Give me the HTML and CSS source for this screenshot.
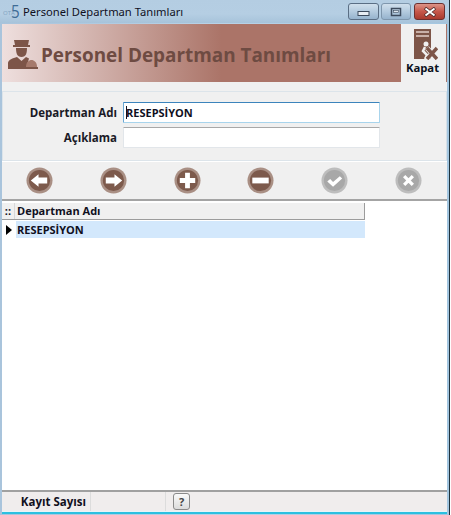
FILE: index.html
```html
<!DOCTYPE html>
<html lang="en">
<head>
    <meta charset="UTF-8">
    <meta name="viewport" content="width=device-width, initial-scale=1.0">
    <title>Personel Departman Tanımları</title>
    <link rel="stylesheet" href="styles.css">
</head>
<body>
    <div class="window">
        <div class="titlebar">
            <div class="app-logo">
                <span class="logo-ota">OTA</span>
                <span class="logo-five">5</span>
            </div>
            <span class="title-text">Personel Departman Tanımları</span>
            <div class="win-buttons">
                <div class="win-btn">
                    <svg width="16" height="10" viewBox="0 0 16 10"><rect x="2" y="4.500" width="11" height="4" fill="#e8eef4" stroke="#3c4a5c"/></svg>
                </div>
                <div class="win-btn win-btn-max">
                    <svg width="12" height="10" viewBox="0 0 12 10"><rect x="1.500" y="1.500" width="9" height="7" fill="none" stroke="#3c4a5c" stroke-width="1.500"/><rect x="3.500" y="3.500" width="5" height="2" fill="#dfe8f0" stroke="#3c4a5c" stroke-width="0.600"/></svg>
                </div>
                <div class="win-btn win-btn-close">
                    <svg width="14" height="10" viewBox="0 0 14 10"><path d="M2 1 L12 9 M12 1 L2 9" stroke="#4a2a2a" stroke-width="3.400"/><path d="M2.500 1.500 L11.500 8.500 M11.500 1.500 L2.500 8.500" stroke="#fff" stroke-width="2"/></svg>
                </div>
            </div>
        </div>

        <div class="content">
            <div class="header">
                <div class="header-main">
                    <svg class="header-icon" width="32" height="32" viewBox="0 0 32 32">
                        <path d="M8 1 L23 1 L22 6 L24 6 L24 8 L7 8 L7 6 L9 6 Z" fill="#7d5548"/>
                        <path d="M10 9 L21 9 C21 14 20 18 15.500 18 C11 18 10 14 10 9 Z" fill="#7d5548"/>
                        <path d="M2 30 L2 24 C2 21 7 19 11 18 L15.500 22 L20 18 C21 18.500 22 19 23 19.500 L20 30 Z" fill="#7d5548"/>
                        <path d="M20 28 C20 23 23 21 25.500 21 C28 21 31 23 31 28 Z" fill="#a67a6c"/>
                        <rect x="19" y="28" width="13" height="2" fill="#7d5548"/>
                    </svg>
                    <span class="header-title">Personel Departman Tanımları</span>
                </div>
                <div class="close-panel">
                    <svg width="25" height="31" viewBox="0 0 25 31">
                        <rect x="1" y="0" width="17" height="30" fill="#7d5548"/>
                        <rect x="3" y="2" width="13" height="2" fill="#c8b0a8"/>
                        <rect x="3" y="6" width="13" height="2" fill="#c8b0a8"/>
                        <circle cx="13" cy="15" r="2.500" fill="#f0f0f0"/>
                        <path d="M12 18 L10 22 L14 26 L12 30" fill="none" stroke="#f0f0f0" stroke-width="2.500"/>
                        <path d="M14 19 L24 30 M24 19 L14 30" stroke="#f0f0f0" stroke-width="5"/>
                        <path d="M14 19 L24 30 M24 19 L14 30" stroke="#7d5548" stroke-width="3.500"/>
                    </svg>
                    <span class="close-label">Kapat</span>
                </div>
            </div>

            <div class="form-area">
                <div class="form-panel">
                    <div class="form-row">
                        <label class="form-label">Departman Adı</label>
                        <div class="form-input form-input-active"><span class="caret"></span>RESEPSİYON</div>
                    </div>
                    <div class="form-row">
                        <label class="form-label">Açıklama</label>
                        <div class="form-input"></div>
                    </div>
                </div>
            </div>

            <div class="toolbar">
                <svg class="tool" viewBox="0 0 28 28"><circle cx="14" cy="14" r="13.500" fill="#a98f84"/><circle cx="14" cy="14" r="11" fill="#7d5a4c"/><path d="M5 14 L13 7.500 L13 11 L22 11 L22 17 L13 17 L13 20.500 Z" fill="#fff"/></svg>
                <svg class="tool" viewBox="0 0 28 28"><circle cx="14" cy="14" r="13.500" fill="#a98f84"/><circle cx="14" cy="14" r="11" fill="#7d5a4c"/><path d="M23 14 L15 7.500 L15 11 L6 11 L6 17 L15 17 L15 20.500 Z" fill="#fff"/></svg>
                <svg class="tool" viewBox="0 0 28 28"><circle cx="14" cy="14" r="13.500" fill="#a98f84"/><circle cx="14" cy="14" r="11" fill="#7d5a4c"/><path d="M11.500 6 H16.500 V11.500 H22 V16.500 H16.500 V22 H11.500 V16.500 H6 V11.500 H11.500 Z" fill="#fff"/></svg>
                <svg class="tool" viewBox="0 0 28 28"><circle cx="14" cy="14" r="13.500" fill="#a98f84"/><circle cx="14" cy="14" r="11" fill="#7d5a4c"/><rect x="5.500" y="11" width="17" height="6" fill="#fff"/></svg>
                <svg class="tool" viewBox="0 0 28 28"><circle cx="14" cy="14" r="13.500" fill="#bdbdbd"/><circle cx="14" cy="14" r="11" fill="#a8a8a8"/><path d="M6.500 15 L9.500 12.500 L12.500 15.500 L19.500 9.500 L22 12 L12.500 20.500 Z" fill="#fff"/></svg>
                <svg class="tool" viewBox="0 0 28 28"><circle cx="14" cy="14" r="13.500" fill="#bdbdbd"/><circle cx="14" cy="14" r="11" fill="#a8a8a8"/><path d="M9.500 9.500 L18.500 18.500 M18.500 9.500 L9.500 18.500" stroke="#fff" stroke-width="3.400"/></svg>
            </div>

            <div class="grid">
                <div class="grid-table">
                    <div class="grid-head">
                        <div class="grid-corner">::</div>
                        <div class="grid-head-cell">Departman Adı</div>
                    </div>
                    <div class="grid-row">
                        <div class="grid-marker"><span class="marker-arrow"></span></div>
                        <div class="grid-cell">RESEPSİYON</div>
                    </div>
                </div>
            </div>

            <div class="statusbar">
                <div class="status-label">Kayıt Sayısı</div>
                <div class="status-empty"></div>
                <div class="status-help"><span class="help-btn">?</span></div>
            </div>
        </div>
    </div>
</body>
</html>
```

FILE: styles.css
```css
html, body {
    margin: 0;
    padding: 0;
    height: 100%;
    background-color: white;
    overflow: hidden;
}

body {
    font-family: "Open Sans", "Noto Sans", sans-serif;
    font-size: 11px;
    color: #10101e;
}

.window {
    width: 450px;
    height: 515px;
    display: flex;
    flex-direction: column;
    box-sizing: border-box;
    background: linear-gradient(to right, #a9c4dc, #b9d2e6 50%, #a3c6e0);
    border-right: 1px solid #20323c;
}

.titlebar {
    height: 23px;
    flex-shrink: 0;
    display: flex;
    align-items: flex-start;
    background: linear-gradient(to bottom, #b4cde2, #b5cee3 60%, #a7c3da);
}

.app-logo {
    width: 23px;
    height: 23px;
    display: flex;
    align-items: center;
    flex-shrink: 0;
    padding-left: 3px;
    box-sizing: border-box;
}

.logo-ota {
    font-size: 6px;
    line-height: 10px;
    margin-top: 3px;
    color: #7fa3c0;
}

.logo-five {
    font-size: 19px;
    line-height: 23px;
    color: #3e6c96;
    margin-left: -4px;
    transform: scaleX(0.8);
    transform-origin: left center;
}

.title-text {
    font-family: "Noto Sans", sans-serif;
    font-size: 11.200px;
    line-height: 23px;
    color: #10101e;
}

.win-buttons {
    margin-left: auto;
    margin-right: 4px;
    margin-top: 3px;
    display: flex;
    gap: 2px;
}

.win-btn {
    width: 31px;
    height: 17px;
    box-sizing: border-box;
    border: 1px solid #5a6e84;
    border-radius: 3px;
    display: flex;
    justify-content: center;
    align-items: center;
    background: linear-gradient(to bottom, #d0dfec, #b4cbdf 50%, #96b3cd);
}

.win-btn-max {
    width: 30px;
    border-color: #7f97ad;
    margin-right: 1px;
}

.win-btn-close {
    border-color: #6c3030;
    background: linear-gradient(to bottom, #dd9488, #c6574a 50%, #a93a2e);
}

.content {
    flex: 1;
    min-height: 0;
    margin: 1px 2px 3px 2px;
    display: flex;
    flex-direction: column;
    background-color: #f0f0f0;
    border-bottom: 1px solid #e8f4f8;
    box-shadow: 0 2px 0 #2cc0e0;
}

.header {
    height: 58px;
    flex-shrink: 0;
    display: flex;
    background: #ab7468;
}

.header-main {
    flex: 1;
    display: flex;
    align-items: center;
    gap: 3px;
    padding-left: 4px;
    background: linear-gradient(to right, #eedfde, #ab7468 55%);
}

.header-icon {
    margin-top: 3px;
}

.header-title {
    font-family: "Open Sans", sans-serif;
    font-weight: bold;
    font-size: 18.900px;
    color: #6e4b42;
    padding-top: 3px;
}

.close-panel {
    width: 45px;
    margin-right: 1px;
    background-color: #f0f0f0;
    display: flex;
    flex-direction: column;
    align-items: center;
    padding-top: 5px;
    padding-left: 3px;
    box-sizing: border-box;
}

.close-label {
    font-weight: bold;
    font-size: 11.300px;
    color: #0c1020;
    line-height: 15px;
    margin-left: -5px;
}

.form-area {
    height: 79px;
    flex-shrink: 0;
    box-sizing: border-box;
    padding-top: 9px;
}

.form-panel {
    height: 70px;
    box-sizing: border-box;
    padding-top: 10px;
    border: 1px solid #dce4ea;
    border-right-color: #d6e0e8;
    display: flex;
    flex-direction: column;
    gap: 4px;
}

.form-row {
    display: flex;
    align-items: center;
}

.form-label {
    width: 114px;
    text-align: right;
    font-weight: bold;
    font-size: 11.500px;
    color: #1a1a26;
}

.form-input {
    width: 257px;
    height: 21px;
    margin-left: 6px;
    box-sizing: border-box;
    background-color: white;
    border: 1px solid #e2e6ea;
    border-top-color: #a8a8a8;
    padding-left: 2px;
    font-weight: bold;
    font-size: 11px;
    line-height: 19px;
    border-radius: 1px;
    display: flex;
    align-items: center;
}

.form-input-active {
    border-color: #a8d4ec;
    border-top-color: #3c84bc;
    border-left-color: #6aa8d4;
}

.caret {
    width: 1px;
    height: 13px;
    background-color: #10101e;
    margin-right: -1px;
}

.toolbar {
    height: 40px;
    flex-shrink: 0;
    box-sizing: border-box;
    border-top: 1px solid white;
    border-bottom: 2px solid #a4a4a4;
    display: flex;
    justify-content: space-between;
    align-items: center;
    padding: 0 25px 0 24px;
}

.tool {
    width: 27px;
    height: 27px;
}

.grid {
    flex: 1;
    min-height: 0;
    background-color: white;
    padding-top: 2px;
    border-bottom: 2px solid #a0a0a0;
}

.grid-table {
    width: 363px;
}

.grid-head {
    height: 17px;
    box-sizing: border-box;
    display: flex;
    background-color: #f0f0f0;
    border-bottom: 1px solid #9c9c9c;
    border-right: 1px solid #9c9c9c;
    font-weight: bold;
    line-height: 16px;
    font-size: 11px;
}

.grid-corner {
    width: 12px;
    text-align: center;
    border-right: 1px solid #d8d8d8;
}

.grid-head-cell {
    padding-left: 2px;
}

.grid-row {
    height: 17px;
    margin-top: 1px;
    display: flex;
    background-color: #d3e8fc;
    font-weight: bold;
    line-height: 17px;
    font-size: 11px;
}

.grid-marker {
    width: 14px;
    background-color: white;
    display: flex;
    align-items: center;
    justify-content: center;
}

.marker-arrow {
    width: 0;
    height: 0;
    border-left: 6px solid black;
    border-top: 5px solid transparent;
    border-bottom: 5px solid transparent;
}

.grid-cell {
    padding-left: 1px;
}

.statusbar {
    height: 19px;
    flex-shrink: 0;
    display: flex;
    background-color: #f0eded;
}

.status-label {
    width: 89px;
    box-sizing: border-box;
    text-align: right;
    padding-right: 4px;
    font-weight: bold;
    font-size: 11.500px;
    line-height: 19px;
    border-right: 1px solid #dcdcdc;
}

.status-empty {
    width: 74px;
    border-right: 1px solid #dcdcdc;
}

.status-help {
    padding: 1px 0 0 7px;
}

.help-btn {
    display: block;
    width: 17px;
    height: 17px;
    box-sizing: border-box;
    border: 1px solid #8a8a8a;
    border-radius: 3px;
    text-align: center;
    font-weight: bold;
    line-height: 15px;
    background: linear-gradient(to bottom, #fafafa, #dcdcdc);
    color: #444;
}
```
